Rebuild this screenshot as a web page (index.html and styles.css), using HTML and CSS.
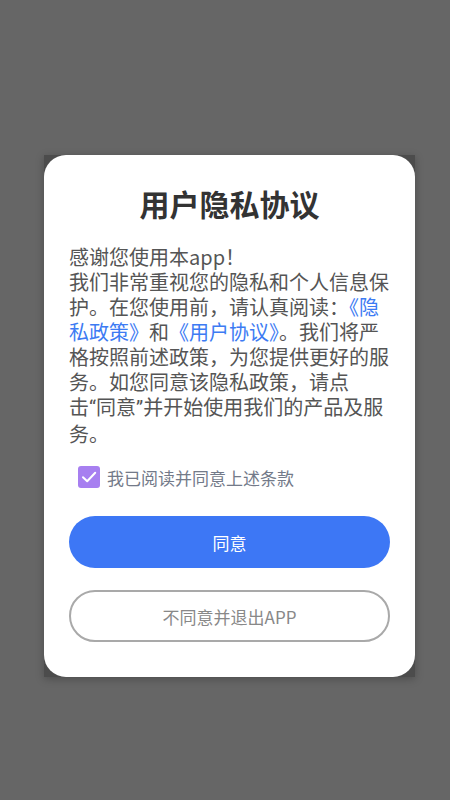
FILE: index.html
```html
<!DOCTYPE html>
<html lang="zh">
<head>
<meta charset="utf-8">
<link rel="stylesheet" href="styles.css">
</head>
<body>
<div class="screen">
  <div class="dialog-frame">
    <div class="dialog">
      <h1 class="title">用户隐私协议</h1>
      <p class="content">感谢您使用本app！<br>我们非常重视您的隐私和个人信息保护。在您使用前，请认真阅读：<span class="link">《隐私政策》</span>和<span class="link">《用户协议》</span>。我们将严格按照前述政策，为您提供更好的服务。如您同意该隐私政策，请点<span class="nowrap">击<span class="quote">“</span>同意<span class="quote">”</span></span>并开始使用我们的产品及服务。</p>
      <label class="agree-row">
        <span class="checkbox">
          <svg viewBox="0 0 22 22" width="22" height="22"><path d="M5 11.2 L9.2 15.2 L17.2 6.8" fill="none" stroke="#fff" stroke-width="2" stroke-linecap="round" stroke-linejoin="round"/></svg>
        </span>
        <span class="agree-text">我已阅读并同意上述条款</span>
      </label>
      <button class="btn btn-primary">同意</button>
      <button class="btn btn-secondary">不同意并退出APP</button>
    </div>
  </div>
</div>
</body>
</html>
```

FILE: styles.css
```css
* { box-sizing: border-box; }
html, body { margin: 0; padding: 0; }
body {
  background: #666666;
  font-family: "Noto Sans CJK SC", "Noto Sans", sans-serif;
}
.screen {
  width: 450px;
  height: 800px;
  display: flex;
  padding: 155px 0 0 44px;
}
.dialog-frame {
  width: 371px;
  height: 522px;
  background: #4c4c4c;
  box-shadow: 0 2px 8px rgba(0,0,0,0.25);
}
.dialog {
  width: 100%;
  height: 100%;
  background: #fff;
  border-radius: 22px;
  padding: 27px 25px 0 25px;
  display: flex;
  flex-direction: column;
}
.title {
  margin: 0;
  font-size: 30px;
  line-height: 42px;
  font-weight: bold;
  color: #333;
  text-align: center;
}
.content {
  margin: 20px 0 0 0;
  font-size: 20px;
  line-height: 25px;
  color: #555;
  width: 321px;
  word-break: break-all;
}
.nowrap { white-space: nowrap; }
.quote { font-family: Roboto, "Noto Sans", sans-serif; }
.link { color: #3d7bf3; }
.agree-row {
  display: flex;
  align-items: center;
  margin: 18px 0 0 9px;
  height: 26px;
}
.checkbox {
  width: 22px;
  height: 22px;
  border-radius: 3px;
  background: #a77ff0;
  display: flex;
}
.agree-text {
  margin-left: 7px;
  font-size: 17px;
  color: #737a89;
}
.btn {
  width: 321px;
  height: 52px;
  border-radius: 26px;
  font-family: inherit;
  font-size: 17px;
  display: flex;
  align-items: center;
  justify-content: center;
  padding: 0;
}
.btn-primary {
  margin-top: 26px;
  background: #3d77f5;
  color: #fff;
  border: none;
}
.btn-secondary {
  margin-top: 22px;
  background: #fff;
  color: #888;
  border: 2px solid #a9a9a9;
}
```
